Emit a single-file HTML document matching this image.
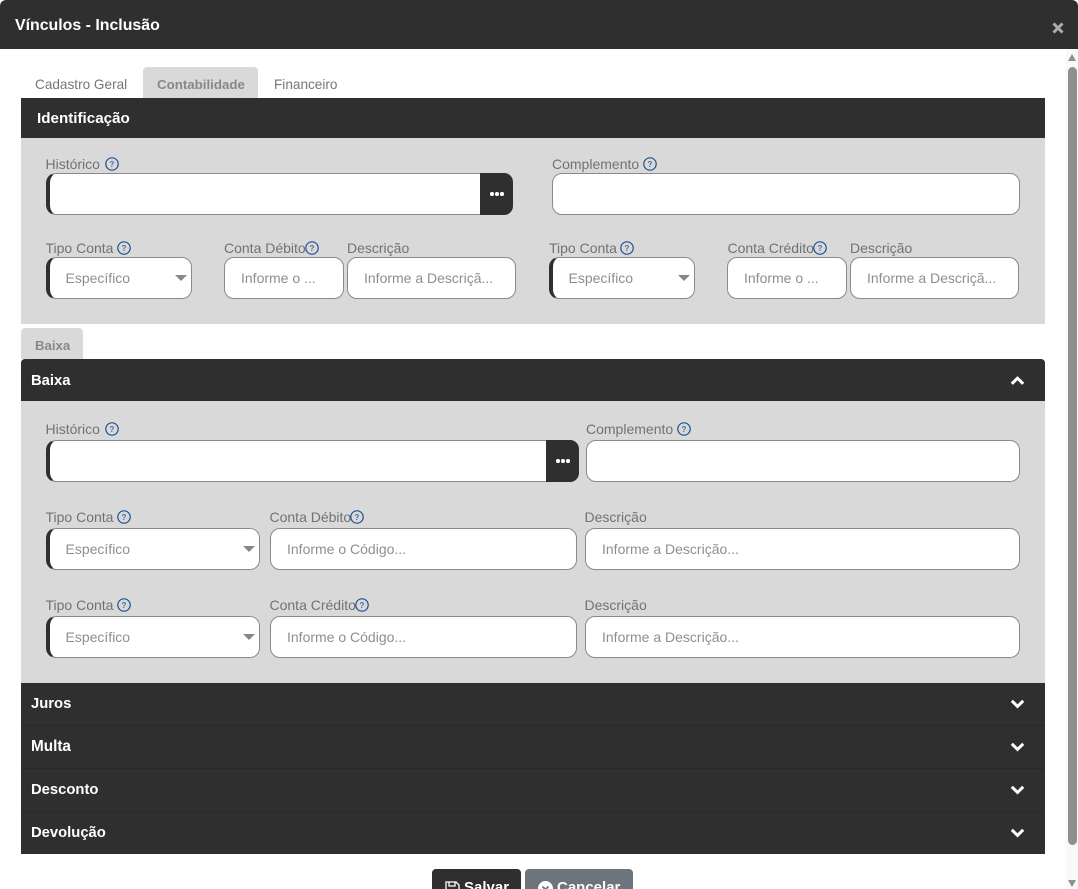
<!DOCTYPE html>
<html lang="pt-BR">
<head>
<meta charset="utf-8">
<title>Vínculos - Inclusão</title>
<style>
html,body{margin:0;padding:0;width:1078px;height:889px;overflow:hidden;background:#fff;font-family:"Liberation Sans",Arial,sans-serif;}
#w{position:relative;width:1078px;height:889px;overflow:hidden;}
div,span{box-sizing:border-box;}
.a{position:absolute;}
.bar{position:absolute;left:21px;width:1024px;background:#2f2f2f;color:#fff;font-weight:bold;font-size:14.8px;line-height:16px;}
.bar span{position:absolute;left:10px;white-space:nowrap;}
.panel{position:absolute;left:21px;width:1024px;background:#d9d9d9;}
.l{position:absolute;font-size:14px;line-height:16px;color:#6f7377;white-space:nowrap;}
.i{position:absolute;height:42px;background:#fff;border:1px solid #8a8a8a;border-radius:10px;font-size:14px;line-height:40px;color:#8b8f93;white-space:nowrap;overflow:hidden;padding-left:16px;}
.d{border-left:4px solid #2f2f2f;}
.s{padding-left:15.5px;}
.s:after{content:"";position:absolute;right:4px;top:17px;border-left:6.5px solid transparent;border-right:6.5px solid transparent;border-top:6px solid #85888b;}
.b{position:absolute;height:42px;background:#2f2f2f;border-radius:0 9px 9px 0;}
.b i{position:absolute;top:19px;width:3.5px;height:3.5px;border-radius:50%;background:#fff;}
.q{position:absolute;width:14px;height:14px;}
.c{position:absolute;left:1010px;width:15px;height:11px;}
.tab{position:absolute;font-size:13.6px;line-height:16px;white-space:nowrap;}
</style>
</head>
<body>
<svg width="0" height="0" style="position:absolute"><defs>
<g id="q"><circle cx="7" cy="7" r="6.2" fill="none" stroke="#1d4f8f" stroke-width="1.2"/><text x="7" y="10" text-anchor="middle" font-family="Liberation Sans,sans-serif" font-size="8" font-weight="bold" fill="#4a6f9f">?</text></g>
</defs></svg>
<div id="w">

<!-- header -->
<div class="a" style="left:0;top:0;width:1078px;height:49px;background:#2f2f2f;border-radius:6px 6px 0 0;"></div>
<div class="a" style="left:15px;top:16px;color:#fff;font-weight:bold;font-size:15.9px;line-height:19px;white-space:nowrap;">Vínculos - Inclusão</div>
<svg class="a" style="left:1052px;top:21.5px" width="12" height="12" viewBox="0 0 12 12"><path d="M1.5 1.5L10.5 10.5M10.5 1.5L1.5 10.5" stroke="#adadad" stroke-width="3" fill="none"/></svg>

<!-- scrollbar -->
<div class="a" style="left:1066px;top:49px;width:12px;height:840px;background:#f9f9f9;"></div>
<div class="a" style="left:1068px;top:67px;width:9px;height:778px;background:#8f8f8f;border-radius:5px;"></div>
<div class="a" style="left:1068px;top:54px;border-left:4.5px solid transparent;border-right:4.5px solid transparent;border-bottom:7px solid #8f8f8f;"></div>
<div class="a" style="left:1068px;top:880px;border-left:4.5px solid transparent;border-right:4.5px solid transparent;border-top:7px solid #8f8f8f;"></div>

<!-- tabs -->
<div class="tab" style="left:35px;top:77px;color:#73777b;">Cadastro Geral</div>
<div class="a" style="left:143px;top:67px;width:115px;height:31px;background:#d9d9d9;border-radius:4px 4px 0 0;"></div>
<div class="tab" style="left:157px;top:77px;color:#85888b;font-weight:bold;font-size:13.3px;">Contabilidade</div>
<div class="tab" style="left:274px;top:77px;color:#73777b;">Financeiro</div>

<!-- identificacao -->
<div class="bar" style="top:98px;height:40px;font-size:15.2px;"><span style="left:16px;top:13px;">Identificação</span></div>
<div class="panel" style="top:138px;height:186px;"></div>

<div class="l" style="left:45.5px;top:156px;">Histórico</div>
<svg class="q" style="left:105px;top:157px"><use href="#q"/></svg>
<div class="i d" style="left:46px;top:173px;width:436px;border-radius:10px 0 0 10px;"></div>
<div class="b" style="left:480px;top:173px;width:33px;"><i style="left:10px"></i><i style="left:15px"></i><i style="left:20px"></i></div>

<div class="l" style="left:552px;top:156px;">Complemento</div>
<svg class="q" style="left:643px;top:157px"><use href="#q"/></svg>
<div class="i" style="left:552px;top:173px;width:468px;"></div>

<div class="l" style="left:45.5px;top:240px;">Tipo Conta</div>
<svg class="q" style="left:117px;top:241px"><use href="#q"/></svg>
<div class="i d s" style="left:46px;top:257px;width:146px;">Específico</div>

<div class="l" style="left:224px;top:240px;">Conta Débito</div>
<svg class="q" style="left:305px;top:241px"><use href="#q"/></svg>
<div class="i" style="left:224px;top:257px;width:120px;">Informe o ...</div>

<div class="l" style="left:347px;top:240px;">Descrição</div>
<div class="i" style="left:347px;top:257px;width:169px;">Informe a Descriçã...</div>

<div class="l" style="left:549px;top:240px;">Tipo Conta</div>
<svg class="q" style="left:620px;top:241px"><use href="#q"/></svg>
<div class="i d s" style="left:549px;top:257px;width:146px;">Específico</div>

<div class="l" style="left:727.5px;top:240px;">Conta Crédito</div>
<svg class="q" style="left:813px;top:241px"><use href="#q"/></svg>
<div class="i" style="left:727px;top:257px;width:120px;">Informe o ...</div>

<div class="l" style="left:850px;top:240px;">Descrição</div>
<div class="i" style="left:850px;top:257px;width:169px;">Informe a Descriçã...</div>

<!-- baixa -->
<div class="a" style="left:21px;top:328px;width:62px;height:31px;background:#d9d9d9;border-radius:4px 4px 0 0;"></div>
<div class="tab" style="left:35px;top:338px;color:#85888b;font-weight:bold;font-size:13.2px;">Baixa</div>
<div class="bar" style="top:359px;height:42px;border-radius:4px 4px 0 0;"><span style="top:13.5px;">Baixa</span></div>
<svg class="c" style="top:375px"><path d="M1.8 8.8L7.5 3.2L13.2 8.8" stroke="#fff" stroke-width="3" fill="none"/></svg>
<div class="panel" style="top:401px;height:282px;"></div>

<div class="l" style="left:45.5px;top:421px;">Histórico</div>
<svg class="q" style="left:105px;top:422px"><use href="#q"/></svg>
<div class="i d" style="left:46px;top:440px;width:502px;border-radius:10px 0 0 10px;"></div>
<div class="b" style="left:546px;top:440px;width:33px;"><i style="left:10px"></i><i style="left:15px"></i><i style="left:20px"></i></div>

<div class="l" style="left:586px;top:421px;">Complemento</div>
<svg class="q" style="left:677px;top:422px"><use href="#q"/></svg>
<div class="i" style="left:586px;top:440px;width:434px;"></div>

<div class="l" style="left:45.5px;top:509px;">Tipo Conta</div>
<svg class="q" style="left:117px;top:510px"><use href="#q"/></svg>
<div class="i d s" style="left:46px;top:528px;width:214px;">Específico</div>
<div class="l" style="left:269.5px;top:509px;">Conta Débito</div>
<svg class="q" style="left:350px;top:510px"><use href="#q"/></svg>
<div class="i" style="left:270px;top:528px;width:307px;">Informe o Código...</div>
<div class="l" style="left:584.5px;top:509px;">Descrição</div>
<div class="i" style="left:585px;top:528px;width:435px;">Informe a Descrição...</div>

<div class="l" style="left:45.5px;top:597px;">Tipo Conta</div>
<svg class="q" style="left:117px;top:598px"><use href="#q"/></svg>
<div class="i d s" style="left:46px;top:616px;width:214px;">Específico</div>
<div class="l" style="left:269.5px;top:597px;">Conta Crédito</div>
<svg class="q" style="left:355px;top:598px"><use href="#q"/></svg>
<div class="i" style="left:270px;top:616px;width:307px;">Informe o Código...</div>
<div class="l" style="left:584.5px;top:597px;">Descrição</div>
<div class="i" style="left:585px;top:616px;width:435px;">Informe a Descrição...</div>

<!-- collapsed bars -->
<div class="bar" style="top:683px;height:43px;border-bottom:1px solid #282828;"><span style="top:13px;">Juros</span></div>
<svg class="c" style="top:698px"><path d="M1.8 2.8L7.5 8.4L13.2 2.8" stroke="#fff" stroke-width="3" fill="none"/></svg>
<div class="bar" style="top:726px;height:43px;border-bottom:1px solid #282828;"><span style="top:13px;font-size:15.3px;">Multa</span></div>
<svg class="c" style="top:741px"><path d="M1.8 2.8L7.5 8.4L13.2 2.8" stroke="#fff" stroke-width="3" fill="none"/></svg>
<div class="bar" style="top:769px;height:43px;border-bottom:1px solid #282828;"><span style="top:13px;">Desconto</span></div>
<svg class="c" style="top:784px"><path d="M1.8 2.8L7.5 8.4L13.2 2.8" stroke="#fff" stroke-width="3" fill="none"/></svg>
<div class="bar" style="top:812px;height:42px;"><span style="top:13px;">Devolução</span></div>
<svg class="c" style="top:827px"><path d="M1.8 2.8L7.5 8.4L13.2 2.8" stroke="#fff" stroke-width="3" fill="none"/></svg>

<!-- buttons -->
<div class="a" style="left:432px;top:869px;width:89px;height:30px;background:#2f2f2f;border-radius:4px 4px 0 0;"></div>
<svg class="a" style="left:445px;top:881px" width="15" height="15" viewBox="0 0 15 15"><path d="M1 1H11L14 4V14H1Z M4 1V5H10V1" fill="none" stroke="#fff" stroke-width="1.3"/></svg>
<div class="a" style="left:464px;top:879px;color:#fff;font-weight:bold;font-size:15px;line-height:17px;white-space:nowrap;">Salvar</div>
<div class="a" style="left:525px;top:869px;width:108px;height:30px;background:#6c757d;border-radius:4px 4px 0 0;"></div>
<svg class="a" style="left:538px;top:881px" width="15" height="15" viewBox="0 0 15 15"><circle cx="7.5" cy="7.5" r="7.5" fill="#fff"/><path d="M4.5 5.5L7.5 8.5L10.5 5.5" stroke="#6c757d" stroke-width="1.8" fill="none"/></svg>
<div class="a" style="left:557px;top:879px;color:#fff;font-weight:bold;font-size:15px;line-height:17px;white-space:nowrap;">Cancelar</div>
</div>
</body>
</html>
